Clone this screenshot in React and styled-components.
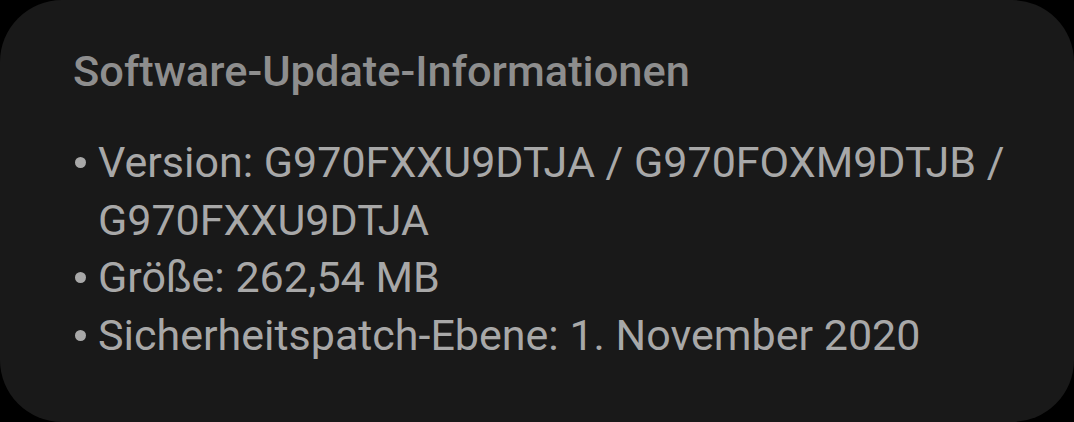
import React from 'react'
import styled, { createGlobalStyle } from 'styled-components'

const Global = createGlobalStyle`
  html, body {
    margin: 0;
    padding: 0;
    background: #000;
  }
  body {
    width: 1074px;
    height: 422px;
    overflow: hidden;
  }
`

const Card = styled.div`
  box-sizing: border-box;
  width: 1074px;
  height: 422px;
  background: #191919;
  border-radius: 62px;
  padding: 47px 40px 0 73px;
  font-family: Roboto, "Liberation Sans", sans-serif;
`

const Title = styled.h2`
  margin: 0;
  font-size: 43.4px;
  font-weight: 500;
  color: #8e8e8e;
  line-height: 50px;
`

const List = styled.ul`
  list-style: none;
  margin: 37px 0 0;
  padding: 0;
`

const Item = styled.li`
  position: relative;
  padding-left: 25px;
  font-size: 43px;
  line-height: 57.5px;
  color: #a8a8a8;

  &::before {
    content: '';
    position: absolute;
    left: 2px;
    top: 23px;
    width: 11px;
    height: 11px;
    border-radius: 50%;
    background: #a8a8a8;
  }
`

export default function App() {
  return (
    <>
      <Global />
      <Card>
        <Title>Software-Update-Informationen</Title>
        <List>
          <Item>Version: G970FXXU9DTJA / G970FOXM9DTJB / G970FXXU9DTJA</Item>
          <Item>Größe: 262,54 MB</Item>
          <Item>Sicherheitspatch-Ebene: 1. November 2020</Item>
        </List>
      </Card>
    </>
  )
}
